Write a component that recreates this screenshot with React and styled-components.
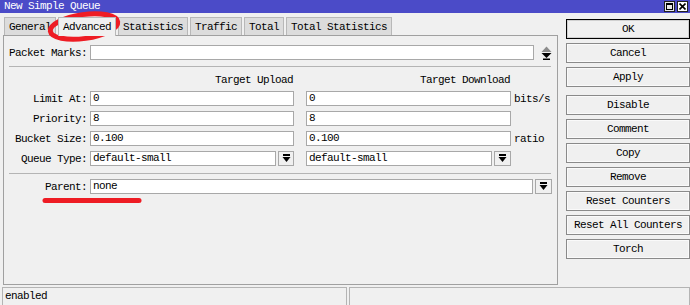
import React from 'react'
import styled, { createGlobalStyle } from 'styled-components'

const GlobalStyle = createGlobalStyle`
  html, body {
    margin: 0;
    padding: 0;
    background: #f0f0f0;
  }
  body {
    font-family: 'Liberation Mono', 'DejaVu Sans Mono', monospace;
    font-size: 11px;
    letter-spacing: -0.6px;
    color: #000;
  }
`

const Window = styled.div`
  position: relative;
  width: 690px;
  height: 305px;
  display: flex;
  flex-direction: column;
  background: #f0f0f0;
  overflow: hidden;
`

const TitleBar = styled.div`
  height: 13px;
  background: #4b4bc8;
  color: #fff;
  display: flex;
  align-items: center;
  padding-left: 4px;
  line-height: 13px;
`

const TitleText = styled.span`
  flex: 1;
`

const TitleButton = styled.span`
  width: 11px;
  height: 11px;
  margin-right: 2px;
  margin-top: -1px;
  background: ${p => (p.light ? '#fff' : '#e8e8e8')};
  border: 1px solid #222;
  box-sizing: border-box;
  display: flex;
  align-items: center;
  justify-content: center;
`

const Body = styled.div`
  flex: 1;
  display: flex;
`

const Main = styled.div`
  width: 555px;
  padding: 4px 0 0 3px;
  display: flex;
  flex-direction: column;
`

const Tabs = styled.div`
  display: flex;
  gap: 2px;
  height: 18px;
  padding-left: 1px;
`

const Tab = styled.div`
  padding: 0 4px;
  border: 1px solid #b8b8b8;
  border-bottom: none;
  background: ${p => (p.active ? '#f0f0f0' : '#dcdcdc')};
  line-height: 18px;
  margin-bottom: ${p => (p.active ? '-1px' : '0')};
  position: relative;
  z-index: ${p => (p.active ? 1 : 0)};
`

const Panel = styled.div`
  height: 250px;
  box-sizing: border-box;
  border: 1px solid #a0a0a0;
  padding: 9px 0 0 5px;
  display: flex;
  flex-direction: column;
`

const Row = styled.div`
  display: flex;
  align-items: center;
  height: 15px;
  margin-bottom: ${p => p.mb || 5}px;
`

const Label = styled.span`
  width: 78px;
  text-align: right;
  margin-right: 3px;
  white-space: nowrap;
`

const Field = styled.div`
  width: ${p => p.w}px;
  height: 15px;
  box-sizing: border-box;
  background: #fff;
  border: 1px solid #a8a8a8;
  padding-left: 2px;
  line-height: 13px;
  white-space: nowrap;
  overflow: hidden;
`

const Gap = styled.span`
  width: ${p => p.w}px;
  flex: none;
`

const Unit = styled.span`
  margin-left: 3px;
`

const Separator = styled.div`
  width: 542px;
  height: 1px;
  background: #b4b4b4;
  margin: ${p => p.m};
`

const Headers = styled.div`
  display: flex;
  height: 14px;
  margin-bottom: 4px;
`

const Header = styled.span`
  width: ${p => p.w}px;
  text-align: right;
  margin-left: ${p => p.ml}px;
  line-height: 14px;
`

const DropButton = styled.div`
  width: ${p => p.w || 17}px;
  height: 15px;
  box-sizing: border-box;
  margin-left: 2px;
  border: 1px solid #a8a8a8;
  background: #f0f0f0;
  display: flex;
  align-items: center;
  justify-content: center;
`

const Spinner = styled.div`
  width: 18px;
  margin-left: 3px;
  display: flex;
  align-items: center;
  justify-content: center;
`

const Side = styled.div`
  width: 124px;
  margin-left: 8px;
  padding-top: 6px;
  display: flex;
  flex-direction: column;
  gap: 4px;
`

const Button = styled.div`
  height: 20px;
  box-sizing: border-box;
  border: 1px solid ${p => (p.primary ? '#000' : '#8a8a8a')};
  box-shadow: inset 0 0 0 1px ${p => (p.primary ? '#d0d0d0' : '#fafafa')};
  background: #f0f0f0;
  text-align: center;
  line-height: 18px;
  margin-top: ${p => (p.spaced ? 4 : 0)}px;
`

const StatusBar = styled.div`
  height: 18px;
  display: flex;
  gap: 2px;
  padding-left: 2px;
`

const StatusCell = styled.div`
  width: ${p => p.w}px;
  flex: ${p => (p.w ? 'none' : 1)};
  box-sizing: border-box;
  border: 1px solid #b4b4b4;
  border-bottom: none;
  padding-left: 2px;
  line-height: 17px;
`

const Marks = styled.svg`
  position: absolute;
  left: 0;
  top: 0;
  pointer-events: none;
`

const DropIcon = () => (
  <svg width="9" height="9" viewBox="0 0 9 9">
    <rect x="1" y="0" width="7" height="2" fill="#000" />
    <path d="M0.5 3 L8.5 3 L4.5 8 Z" fill="#000" />
  </svg>
)

const SpinIcon = () => (
  <svg width="11" height="14" viewBox="0 0 11 14">
    <path d="M5.5 0.5 L10.5 6 L0.5 6 Z" fill="#8c8c8c" />
    <path d="M0.5 7 L10.5 7 L5.5 12 Z" fill="#000" />
    <rect x="2" y="12.5" width="7" height="1.5" fill="#000" />
  </svg>
)

const tabs = ['General', 'Advanced', 'Statistics', 'Traffic', 'Total', 'Total Statistics']
const buttons = ['OK', 'Cancel', 'Apply', 'Disable', 'Comment', 'Copy', 'Remove', 'Reset Counters', 'Reset All Counters', 'Torch']

const App = () => (
  <>
    <GlobalStyle />
    <Window>
      <TitleBar>
        <TitleText>New Simple Queue</TitleText>
        <TitleButton>
          <svg width="7" height="7" viewBox="0 0 7 7">
            <rect x="0.5" y="0.5" width="6" height="6" fill="none" stroke="#000" />
            <rect x="0" y="0" width="7" height="2" fill="#000" />
          </svg>
        </TitleButton>
        <TitleButton light>
          <svg width="7" height="7" viewBox="0 0 7 7">
            <path d="M0.5 0.5 L6.5 6.5 M6.5 0.5 L0.5 6.5" stroke="#000" strokeWidth="1.6" />
          </svg>
        </TitleButton>
      </TitleBar>
      <Body>
        <Main>
          <Tabs>
            {tabs.map(t => (
              <Tab key={t} active={t === 'Advanced'}>{t}</Tab>
            ))}
          </Tabs>
          <Panel>
            <Row mb={6}>
              <Label>Packet Marks:</Label>
              <Field w={444} />
              <Spinner><SpinIcon /></Spinner>
            </Row>
            <Separator m="0 0 6px 0" />
            <Headers>
              <Header w={284} ml={0}>Target Upload</Header>
              <Header w={204} ml={13}>Target Download</Header>
            </Headers>
            <Row>
              <Label>Limit At:</Label>
              <Field w={204}>0</Field>
              <Gap w={12} />
              <Field w={205}>0</Field>
              <Unit>bits/s</Unit>
            </Row>
            <Row>
              <Label>Priority:</Label>
              <Field w={204}>8</Field>
              <Gap w={12} />
              <Field w={205}>8</Field>
            </Row>
            <Row>
              <Label>Bucket Size:</Label>
              <Field w={204}>0.100</Field>
              <Gap w={12} />
              <Field w={205}>0.100</Field>
              <Unit>ratio</Unit>
            </Row>
            <Row mb={7}>
              <Label>Queue Type:</Label>
              <Field w={186}>default-small</Field>
              <DropButton w={16}><DropIcon /></DropButton>
              <Gap w={12} />
              <Field w={186}>default-small</Field>
              <DropButton><DropIcon /></DropButton>
            </Row>
            <Separator m="0 0 5px 0" />
            <Row>
              <Label>Parent:</Label>
              <Field w={443}>none</Field>
              <DropButton><DropIcon /></DropButton>
            </Row>
          </Panel>
        </Main>
        <Side>
          {buttons.map(b => (
            <Button key={b} primary={b === 'OK'} spaced={b === 'Disable'}>{b}</Button>
          ))}
        </Side>
      </Body>
      <StatusBar>
        <StatusCell w={345}>enabled</StatusCell>
        <StatusCell />
      </StatusBar>
      <Marks width="690" height="305" viewBox="0 0 690 305">
        <ellipse cx="84" cy="26.5" rx="34" ry="12" fill="none" stroke="#ee1c24" strokeWidth="5" transform="rotate(-8 84 26.5)" />
        <line x1="45" y1="200.5" x2="139" y2="200.5" stroke="#ee1c24" strokeWidth="5" strokeLinecap="round" />
      </Marks>
    </Window>
  </>
)

export default App
